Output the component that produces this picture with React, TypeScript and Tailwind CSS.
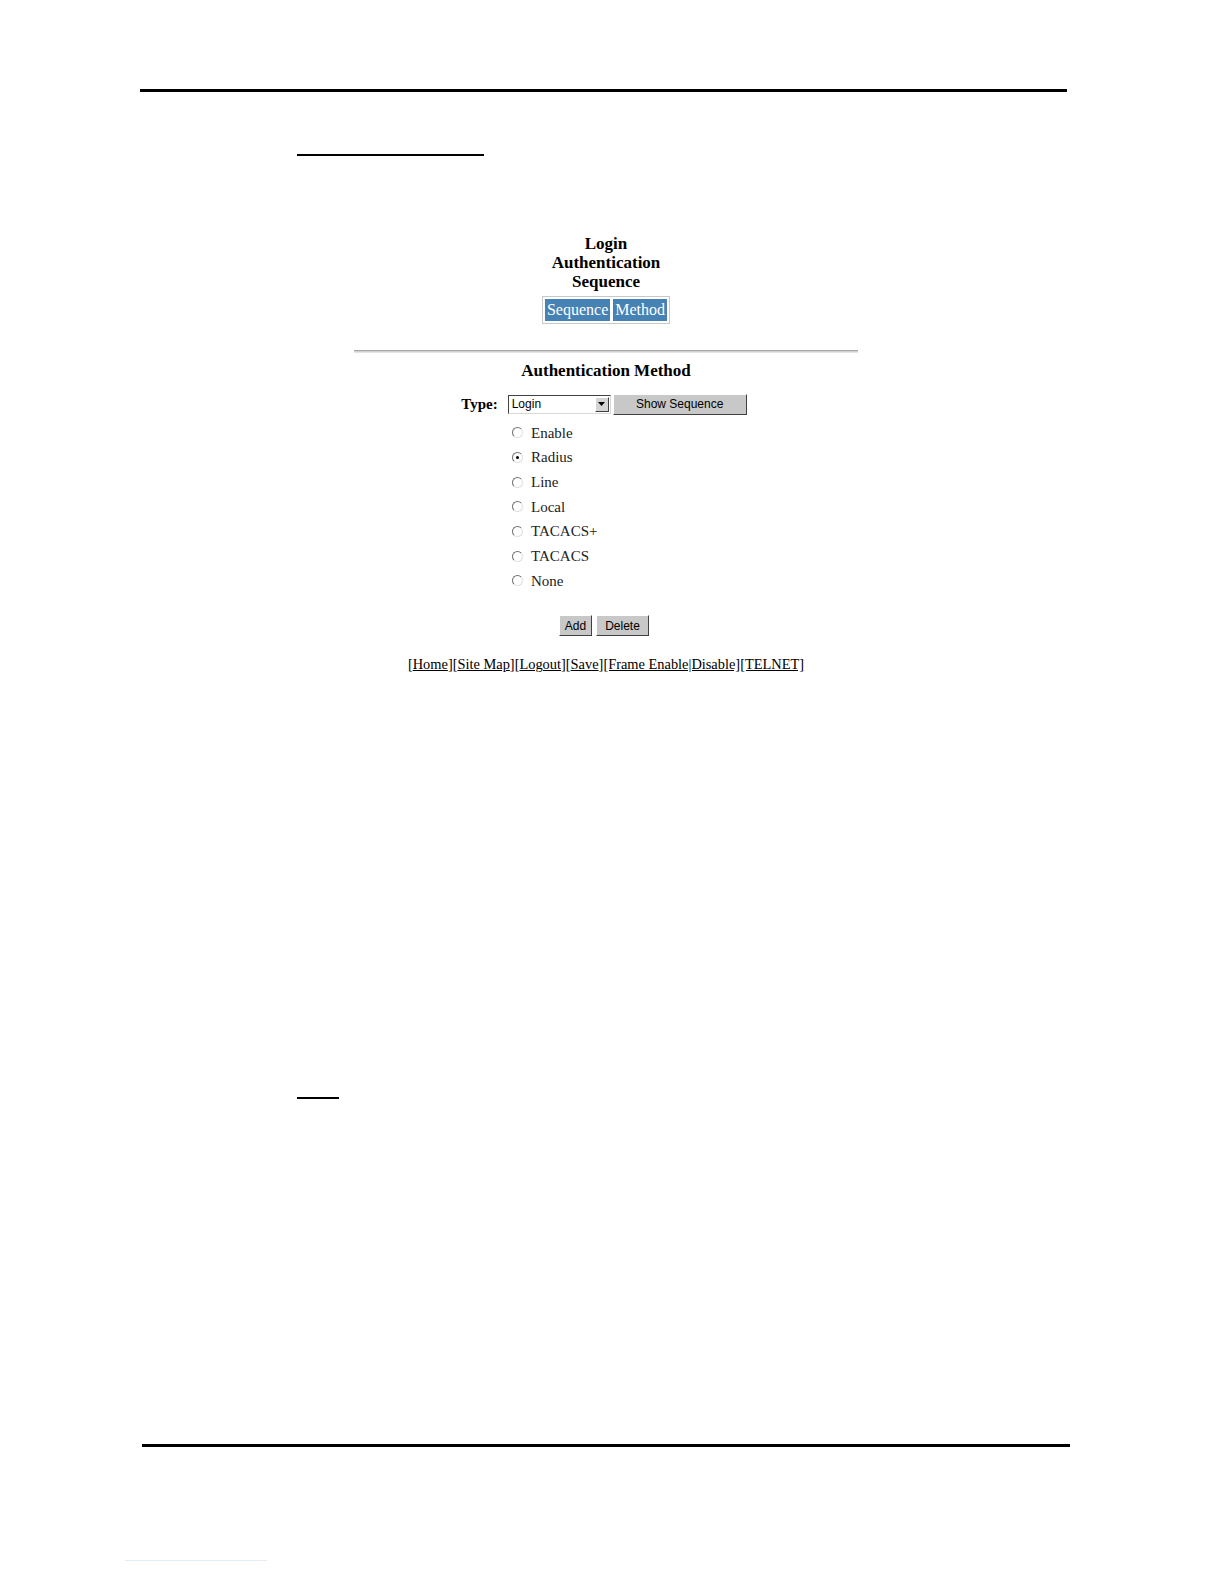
import React from 'react';

const methods = ['Enable', 'Radius', 'Line', 'Local', 'TACACS+', 'TACACS', 'None'];
const links = ['Home', 'Site Map', 'Logout', 'Save'];

function Radio({ checked }: { checked?: boolean }) {
  return (
    <span className="relative inline-block w-[11px] h-[11px] rounded-full border border-t-[#707070] border-l-[#707070] border-b-[#e0e0e0] border-r-[#e0e0e0] bg-white">
      {checked && <span className="absolute left-[3px] top-[3px] w-[3px] h-[3px] rounded-full bg-black" />}
    </span>
  );
}

function WinButton({ children, className }: { children: React.ReactNode; className?: string }) {
  return (
    <button
      className={
        'flex items-center justify-center bg-[#c8c8c8] text-[12px] text-black border border-t-white border-l-white border-b-[#404040] border-r-[#404040] ' +
        (className ?? '')
      }
      style={{ fontFamily: '"Liberation Sans", Arial, sans-serif' }}
    >
      {children}
    </button>
  );
}

export default function App() {
  return (
    <div
      className="w-full h-screen bg-white text-black flex flex-col overflow-hidden"
      style={{ fontFamily: '"Liberation Serif", "Times New Roman", serif' }}
    >
      {/* header rule */}
      <div className="shrink-0 mt-[89px] ml-[140px] w-[927px] h-[3px] bg-black" />
      <div className="shrink-0 mt-[62px] ml-[297px] w-[187px] h-[2px] bg-black" />

      {/* screenshot of the web form */}
      <div className="shrink-0 ml-[354px] w-[504px] flex flex-col items-center">
        <div className="mt-[78px] text-center font-bold text-[17px] leading-[19px]">
          <div>Login</div>
          <div>Authentication</div>
          <div>Sequence</div>
        </div>

        <div className="mt-[5px] flex gap-[3px] p-[2px] border border-[#c8c8c8]">
          <span className="bg-[#4682b4] text-white text-[16px] leading-[22px] px-[2px]">Sequence</span>
          <span className="bg-[#4682b4] text-white text-[16px] leading-[22px] px-[2px]">Method</span>
        </div>

        <div className="mt-[26px] w-full h-[3px] border-t border-t-[#a8a8a8] border-b border-b-[#e4e4e4] bg-[#d0d0d0]" />

        <div className="mt-[8px] font-bold text-[17px] leading-[19px]">Authentication Method</div>

        <div className="mt-[13px] flex items-center -ml-[4px]">
          <span className="font-bold text-[15px] mr-[10px]">Type:</span>
          <div
            className="relative w-[103px] h-[19px] bg-white border border-t-[#404040] border-l-[#404040] border-b-[#d8d8d8] border-r-[#d8d8d8] flex items-center text-[12px] pl-[3px]"
            style={{ fontFamily: '"Liberation Sans", Arial, sans-serif' }}
          >
            Login
            <span className="absolute right-[1px] top-[1px] w-[14px] h-[15px] bg-[#d4d4d4] border border-t-white border-l-white border-b-[#404040] border-r-[#404040] flex items-center justify-center">
              <svg width="7" height="4" viewBox="0 0 7 4">
                <path d="M0 0h7L3.5 4z" fill="#000" />
              </svg>
            </span>
          </div>
          <WinButton className="ml-[2px] w-[134px] h-[21px]">Show Sequence</WinButton>
        </div>

        <div className="self-start ml-[158px] mt-[5px] flex flex-col">
          {methods.map((m) => (
            <label key={m} className="flex items-center h-[24.7px] text-[15px] text-[#222]">
              <Radio checked={m === 'Radius'} />
              <span className="ml-[8px]">{m}</span>
            </label>
          ))}
        </div>

        <div className="mt-[22px] flex gap-[4px] -ml-[4px]">
          <WinButton className="w-[33px] h-[21px]">Add</WinButton>
          <WinButton className="w-[53px] h-[21px]">Delete</WinButton>
        </div>

        <div className="mt-[19px] text-[14.4px] leading-[18px] underline whitespace-nowrap">
          {links.map((l) => (
            <span key={l}>[{l}]</span>
          ))}
          <span>[Frame Enable|Disable]</span>
          <span>[TELNET]</span>
        </div>
      </div>

      <div className="shrink-0 mt-[424px] ml-[297px] w-[42px] h-[2px] bg-black" />

      {/* footer rule */}
      <div className="shrink-0 mt-[345px] ml-[142px] w-[928px] h-[3px] bg-black" />
      <div className="shrink-0 mt-[113px] ml-[125px] w-[142px] h-[1px] bg-[#e4ecf8]" />
    </div>
  );
}
